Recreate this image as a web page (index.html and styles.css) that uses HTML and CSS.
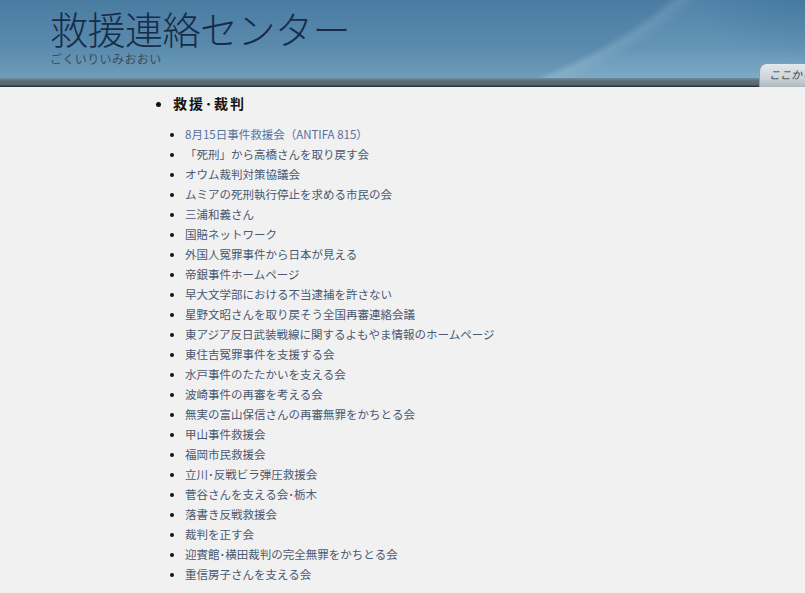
FILE: index.html
```html
<!DOCTYPE html>
<html lang="ja">
<head>
    <meta charset="UTF-8">
    <title>救援連絡センター</title>
    <link rel="stylesheet" href="styles.css">
</head>
<body>
    <div class="header">
        <h1 class="site-title">救援連絡センター</h1>
        <p class="site-sub">ごくいりいみおおい</p>
        <div class="here-tab">ここから</div>
    </div>

    <div class="content">
        <ul class="cat">
            <li class="cat-title">救援･裁判
                <ul class="links">
                    <li><a class="fresh" href="#">8月15日事件救援会（ANTIFA 815）</a></li>
                    <li><a href="#">「死刑」から高橋さんを取り戻す会</a></li>
                    <li><a href="#">オウム裁判対策協議会</a></li>
                    <li><a href="#">ムミアの死刑執行停止を求める市民の会</a></li>
                    <li><a href="#">三浦和義さん</a></li>
                    <li><a href="#">国賠ネットワーク</a></li>
                    <li><a href="#">外国人冤罪事件から日本が見える</a></li>
                    <li><a href="#">帝銀事件ホームページ</a></li>
                    <li><a href="#">早大文学部における不当逮捕を許さない</a></li>
                    <li><a href="#">星野文昭さんを取り戻そう全国再審連絡会議</a></li>
                    <li><a href="#">東アジア反日武装戦線に関するよもやま情報のホームページ</a></li>
                    <li><a href="#">東住吉冤罪事件を支援する会</a></li>
                    <li><a href="#">水戸事件のたたかいを支える会</a></li>
                    <li><a href="#">波崎事件の再審を考える会</a></li>
                    <li><a href="#">無実の富山保信さんの再審無罪をかちとる会</a></li>
                    <li><a href="#">甲山事件救援会</a></li>
                    <li><a href="#">福岡市民救援会</a></li>
                    <li><a href="#">立川･反戦ビラ弾圧救援会</a></li>
                    <li><a href="#">菅谷さんを支える会･栃木</a></li>
                    <li><a href="#">落書き反戦救援会</a></li>
                    <li><a href="#">裁判を正す会</a></li>
                    <li><a href="#">迎賓館･横田裁判の完全無罪をかちとる会</a></li>
                    <li><a href="#">重信房子さんを支える会</a></li>
                </ul>
            </li>
        </ul>
    </div>
</body>
</html>
```

FILE: styles.css
```css
body {
    margin: 0;
    padding: 0;
    background-color: #f1f1f1;
    font-family: "Noto Sans CJK JP", "Liberation Sans", sans-serif;
    color: #222;
}
.header {
    position: relative;
    height: 87px;
    padding: 0 0 0 50px;
    box-sizing: border-box;
    background:
        linear-gradient(to bottom, rgba(0, 0, 0, 0) 0px, rgba(0, 0, 0, 0) 78px, #6f8c9d 78px, #5d6e79 81px, #56646e 85px, #2b3640 86px, #2b3640 87px),
        radial-gradient(ellipse 576px 302px at 200px -150px, rgba(35, 85, 125, 0.16) 0%, rgba(35, 85, 125, 0.16) 95%, rgba(255, 255, 255, 0.08) 97%, rgba(255, 255, 255, 0) 100%),
        radial-gradient(ellipse 110px 60px at 805px 0px, rgba(40, 100, 140, 0.3) 0%, rgba(40, 100, 140, 0) 100%),
        linear-gradient(to bottom, #5283a9 0%, #6595b6 55%, #7dabc5 90%);
}
.site-title {
    margin: 0;
    font-size: 38px;
    font-weight: 300;
    line-height: 56px;
    color: #172c4a;
    letter-spacing: -0.5px;
}
.site-sub {
    margin: -4px 0 0 0;
    font-size: 12px;
    line-height: 14px;
    color: #3a4c5e;
    letter-spacing: 0.4px;
}
/* タブは右端で切れている */
.here-tab {
    position: absolute;
    left: 759px;
    right: 0;
    bottom: 0;
    height: 20px;
    padding: 3px 0 0 9px;
    overflow: hidden;
    white-space: nowrap;
    font-size: 11px;
    line-height: 14px;
    font-style: italic;
    color: #3f4a52;
    background: linear-gradient(to bottom, #e2e9ed 0%, #cdd5da 60%, #aeb8be 100%);
    border: 1px solid #8d9ca6;
    border-right: none;
    border-bottom: none;
    border-radius: 8px 0 0 0;
}
.content {
    padding: 5px 0 20px 173px;
}
.cat {
    margin: 0;
    padding: 0;
    list-style: disc outside;
}
.cat-title {
    font-size: 14px;
    font-weight: bold;
    line-height: 22px;
    letter-spacing: 2px;
    color: #111;
}
.links {
    margin: 10px 0 0 0;
    padding: 0 0 0 12px;
    list-style: disc outside;
    font-weight: normal;
    letter-spacing: 0;
}
.links li {
    font-size: 11.5px;
    line-height: 20px;
    color: #111;
}
.links a {
    color: #4a5870;
    text-decoration: none;
}
.links a.fresh {
    color: #56709c;
}
```
